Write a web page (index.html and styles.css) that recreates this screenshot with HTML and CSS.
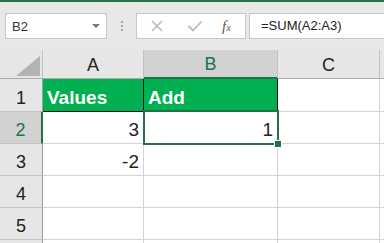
FILE: index.html
```html
<!DOCTYPE html>
<html lang="en">
<head>
    <meta charset="UTF-8">
    <meta name="viewport" content="width=device-width, initial-scale=1.0">
    <title>Book1 - Excel</title>
    <link rel="stylesheet" href="styles.css">
</head>
<body>
    <div class="title-strip"></div>

    <div class="formula-bar">
        <div class="name-box">
            <span>B2</span>
            <span class="caret"></span>
        </div>
        <div class="grip">
            <i></i><i></i><i></i>
        </div>
        <div class="fx-box">
            <svg class="icon" width="14" height="14" viewBox="0 0 14 14">
                <path d="M2 2 L12 12 M12 2 L2 12" stroke="#b9b9b9" stroke-width="1.6" fill="none"/>
            </svg>
            <svg class="icon" width="16" height="14" viewBox="0 0 16 14">
                <path d="M1.5 7 L6 11.5 L14.5 2.5" stroke="#b9b9b9" stroke-width="1.8" fill="none"/>
            </svg>
            <span class="fx">f<sub>x</sub></span>
        </div>
        <div class="formula-input">=SUM(A2:A3)</div>
    </div>

    <div class="sheet">
        <div class="corner">
            <svg width="24" height="20" viewBox="0 0 24 20">
                <path d="M0 20 L24 20 L24 0 Z" fill="#b3b3b3"/>
            </svg>
        </div>
        <div class="col-head">A</div>
        <div class="col-head active">B</div>
        <div class="col-head">C</div>
        <div class="col-head"></div>

        <div class="row-head">1</div>
        <div class="cell head-cell">Values</div>
        <div class="cell head-cell">Add</div>
        <div class="cell"></div>
        <div class="cell"></div>

        <div class="row-head active">2</div>
        <div class="cell num">3</div>
        <div class="cell num">1</div>
        <div class="cell"></div>
        <div class="cell"></div>

        <div class="row-head">3</div>
        <div class="cell num">-2</div>
        <div class="cell"></div>
        <div class="cell"></div>
        <div class="cell"></div>

        <div class="row-head">4</div>
        <div class="cell"></div>
        <div class="cell"></div>
        <div class="cell"></div>
        <div class="cell"></div>

        <div class="row-head">5</div>
        <div class="cell"></div>
        <div class="cell"></div>
        <div class="cell"></div>
        <div class="cell"></div>

        <!-- row 6 only peeks in at the bottom edge -->
        <div class="row-head"></div>
        <div class="cell"></div>
        <div class="cell"></div>
        <div class="cell"></div>
        <div class="cell"></div>

        <div class="selection"></div>
        <div class="fill-handle"></div>
    </div>
</body>
</html>
```

FILE: styles.css
```css
body {
    margin: 0;
    height: 243px;
    overflow: hidden;
    background-color: #e8e8e8;
    font-family: 'Liberation Sans', Arial, sans-serif;
    color: #222;
}

.title-strip {
    height: 2px;
    background-color: #217346;
}

/* formula bar */
.formula-bar {
    display: flex;
    align-items: center;
    height: 26px;
    margin: 11px 0 11px 5px;
}
.name-box {
    box-sizing: border-box;
    width: 102px;
    height: 26px;
    background: white;
    border: 1px solid #c6c6c6;
    display: flex;
    align-items: center;
    justify-content: space-between;
    padding: 0 6px 0 6px;
    font-size: 13px;
    color: #333;
}
.caret {
    width: 0;
    height: 0;
    border-left: 4px solid transparent;
    border-right: 4px solid transparent;
    border-top: 4px solid #777;
}
.grip {
    width: 2px;
    margin: 0 13px 0 14px;
    display: flex;
    flex-direction: column;
    gap: 2px;
}
.grip i {
    display: block;
    width: 2px;
    height: 2px;
    background: #a6a6a6;
}
.fx-box {
    box-sizing: border-box;
    width: 110px;
    height: 26px;
    background: white;
    border: 1px solid #c6c6c6;
    display: flex;
    align-items: center;
    padding-left: 13px;
}
.fx-box .icon:first-child {
    margin-right: 23px;
}
.fx {
    margin-left: 19px;
    font-family: 'Liberation Serif', serif;
    font-style: italic;
    font-size: 15px;
    color: #595959;
}
.fx sub {
    font-size: 10px;
    vertical-align: 0;
}
.formula-input {
    box-sizing: border-box;
    flex: 1;
    height: 26px;
    margin-left: 3px;
    background: white;
    border: 1px solid #c6c6c6;
    border-right: none;
    padding-left: 11px;
    line-height: 24px;
    font-size: 13px;
}

/* grid */
.sheet {
    position: relative;
    display: grid;
    grid-template-columns: 43px 101px 134px 102px 1fr;
    grid-template-rows: 29px 33px repeat(5, 32px);
}
.corner,
.col-head,
.row-head {
    box-sizing: border-box;
    background-color: #e6e6e6;
    border-right: 1px solid #c2c2c2;
    border-bottom: 1px solid #ababab;
    font-size: 18px;
    color: #222;
    display: flex;
    align-items: flex-end;
    justify-content: center;
    line-height: 22px;
    padding-bottom: 2px;
}
.corner {
    justify-content: flex-end;
    padding: 0 2px 2px 0;
}
.corner svg {
    display: block;
}
.row-head {
    border-right-color: #9e9e9e;
    border-bottom-color: #c2c2c2;
}
.col-head.active,
.row-head.active {
    background-color: #d2d2d2;
    color: #217346;
}
.col-head.active {
    border-bottom: 2px solid #217346;
}
.row-head.active {
    border-right: 2px solid #217346;
}
.cell {
    box-sizing: border-box;
    background: white;
    border-right: 1px solid #d4d4d4;
    border-bottom: 1px solid #d4d4d4;
    font-size: 19px;
    line-height: 22px;
    padding: 0 4px 2px 4px;
    display: flex;
    align-items: flex-end;
    white-space: nowrap;
}
.head-cell {
    background-color: #00b050;
    color: white;
    font-weight: bold;
    border-right-color: #111;
    border-bottom-color: #111;
}
.num {
    justify-content: flex-end;
}

/* selected cell B2 */
.selection {
    position: absolute;
    left: 143px;
    top: 60px;
    width: 136px;
    height: 35px;
    box-sizing: border-box;
    border: 2px solid #217346;
}
.fill-handle {
    position: absolute;
    left: 274px;
    top: 90px;
    width: 6px;
    height: 6px;
    background: #217346;
    border: 1px solid white;
}
```
